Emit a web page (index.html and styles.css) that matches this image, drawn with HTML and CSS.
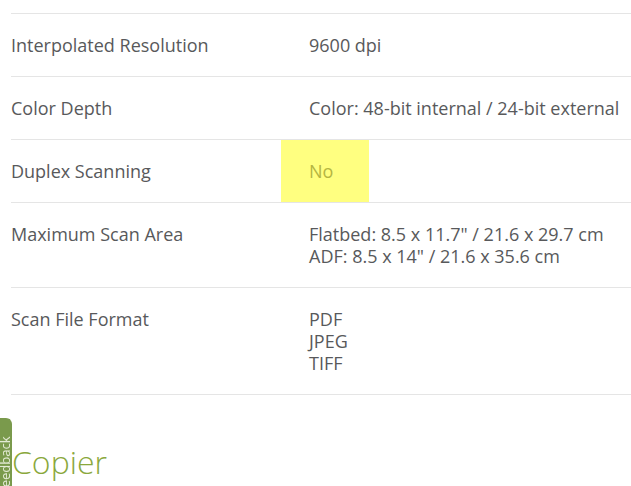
FILE: index.html
```html
<!DOCTYPE html>
<html>
<head>
<meta charset="utf-8">
<link rel="stylesheet" href="styles.css">
</head>
<body>
<div class="page">
  <div class="specs">
    <div class="row">
      <div class="label">Interpolated Resolution</div>
      <div class="value">9600 dpi</div>
    </div>
    <div class="row">
      <div class="label">Color Depth</div>
      <div class="value">Color: 48-bit internal / 24-bit external</div>
    </div>
    <div class="row">
      <div class="label">Duplex Scanning</div>
      <div class="value highlight">No</div>
    </div>
    <div class="row">
      <div class="label">Maximum Scan Area</div>
      <div class="value">Flatbed: 8.5 x 11.7" / 21.6 x 29.7 cm<br>ADF: 8.5 x 14" / 21.6 x 35.6 cm</div>
    </div>
    <div class="row">
      <div class="label">Scan File Format</div>
      <div class="value">PDF<br>JPEG<br>TIFF</div>
    </div>
  </div>
  <h2 class="section-title">Copier</h2>
</div>
<div class="feedback">Feedback</div>
</body>
</html>
```
FILE: styles.css
```css
html, body {
  margin: 0;
  padding: 0;
  background: #fff;
  overflow: hidden;
}
body {
  font-family: "Open Sans", "DejaVu Sans", sans-serif;
  color: #58595b;
  font-size: 18px;
  line-height: 22px;
}
.page {
  padding-left: 11px;
}
.specs {
  margin-top: 13px;
  border-top: 1px solid #e5e5e5;
}
.row {
  display: grid;
  grid-template-columns: 270px 1fr;
  border-bottom: 1px solid #e5e5e5;
}
.label {
  padding: 20px 0 20px 0;
}
.value {
  padding: 20px 0 20px 28px;
}
.value.highlight {
  justify-self: start;
  background: #ffff80;
  color: #b5b542;
  padding-right: 36px;
}
.section-title {
  margin: 45px 0 0 1px;
  font-size: 32px;
  font-weight: 300;
  color: #8aa83c;
  line-height: normal;
}
.feedback {
  position: fixed;
  left: -19px;
  top: 418px;
  width: 31px;
  height: 90px;
  box-sizing: border-box;
  padding: 14px 17px 0 0;
  background: #7a9a4c;
  border-radius: 6px 0 0 6px;
  color: #e9efdc;
  font-size: 13px;
  line-height: 14px;
  writing-mode: vertical-rl;
  transform: rotate(180deg);
}
```
